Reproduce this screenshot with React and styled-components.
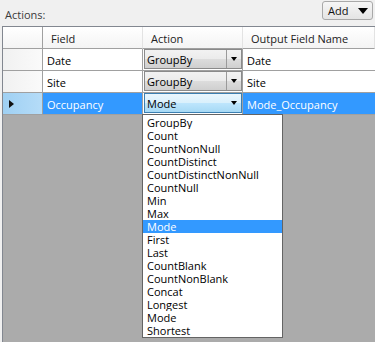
import React from "react";
import styled, { createGlobalStyle, css } from "styled-components";

const GlobalStyle = createGlobalStyle`
  html, body { margin: 0; padding: 0; background: #f0f0f0; }
  body { font-family: "Open Sans", "Noto Sans", sans-serif; font-size: 11px; color: #000; }
  * { box-sizing: border-box; }
`;

const Page = styled.div`
  width: 375px;
  height: 342px;
  display: flex;
  flex-direction: column;
  background: #f0f0f0;
  overflow: hidden;
`;

const TopBar = styled.div`
  height: 26px;
  display: flex;
  align-items: flex-start;
  justify-content: space-between;
  padding: 1px 2px 0 5px;
`;

const Label = styled.span`
  margin-top: 6px;
  color: #3a3a3a;
`;

const AddButton = styled.button`
  width: 51px;
  height: 19px;
  display: flex;
  align-items: center;
  justify-content: space-between;
  padding: 0 4px 0 5px;
  border: 1px solid #a9a9a9;
  border-radius: 3px;
  background: linear-gradient(#f6f6f6, #e4e4e4);
  font: inherit;
  color: #111;
`;

const Caret = styled.span`
  width: 0;
  height: 0;
  border-left: ${(p) => p.$w / 2}px solid transparent;
  border-right: ${(p) => p.$w / 2}px solid transparent;
  border-top: ${(p) => p.$h}px solid #000;
`;

const Frame = styled.div`
  flex: 1;
  margin-left: 2px;
  border-left: 1px solid #828790;
  border-top: 1px solid #828790;
  background: #ababab;
  position: relative;
`;

const Row = styled.div`
  display: grid;
  grid-template-columns: 40px 100px 100px 1fr;
  height: 22px;
`;

const HeadCell = styled.div`
  display: flex;
  align-items: center;
  padding: 2px 0 0 8px;
  background: linear-gradient(#ffffff, #f4f4f4);
  border-bottom: 1px solid #a0a0a0;
  border-right: 1px solid ${(p) => (p.$first ? "#a0a0a0" : "#e3e3e3")};
  color: #222;
`;

const RowHead = styled.div`
  display: flex;
  align-items: center;
  padding-left: 6px;
  background: ${(p) =>
    p.$selected ? "linear-gradient(to right, #9fd0f3, #b5dcf8)" : "linear-gradient(to right, #f1f1f1, #fafafa)"};
  border-right: 1px solid #a0a0a0;
  border-bottom: 1px solid #a0a0a0;
`;

const Pointer = styled.span`
  width: 0;
  height: 0;
  border-top: 4px solid transparent;
  border-bottom: 4px solid transparent;
  border-left: 5px solid #111;
`;

const Cell = styled.div`
  display: flex;
  align-items: center;
  padding: 1px 0 0 4px;
  border-right: ${(p) => (p.$last ? "none" : "1px solid #a0a0a0")};
  border-bottom: 1px solid #a0a0a0;
  background: ${(p) => (p.$selected ? "#3399ff" : "#fff")};
  color: ${(p) => (p.$selected ? "#fff" : "#000")};
`;

const ComboCell = styled.div`
  position: relative;
  padding: 0 0 1px 1px;
  border-right: 1px solid #a0a0a0;
  border-bottom: 1px solid #a0a0a0;
  background: #fff;
`;

const Combo = styled.div`
  height: 20px;
  width: 98px;
  display: flex;
  align-items: stretch;
  border: 1px solid ${(p) => (p.$active ? "#3c7fb1" : "#8a8a8a")};
  ${(p) =>
    p.$active
      ? css`
          background: linear-gradient(#eaf6fd 0%, #d9f0fc 50%, #bee6fd 50%, #a7d9f5 100%);
        `
      : css`
          background: linear-gradient(#f2f2f2 0%, #ebebeb 50%, #dddddd 50%, #cfcfcf 100%);
        `}
`;

const ComboText = styled.span`
  flex: 1;
  display: flex;
  align-items: center;
  padding: 1px 0 0 2px;
`;

const ComboArrow = styled.span`
  width: 15px;
  display: flex;
  align-items: center;
  justify-content: center;
  border-left: 1px solid ${(p) => (p.$active ? "transparent" : "#9a9a9a")};
`;

const DropList = styled.ul`
  position: absolute;
  left: -1px;
  top: 21px;
  width: 141px;
  height: 224px;
  margin: 0;
  padding: 1px 0 0;
  list-style: none;
  background: #fff;
  border: 1px solid #646464;
  z-index: 5;
`;

const Item = styled.li`
  height: 13px;
  line-height: 13px;
  padding-left: 4px;
  white-space: nowrap;
  overflow: hidden;
  background: ${(p) => (p.$hl ? "#3399ff" : "transparent")};
  color: ${(p) => (p.$hl ? "#fff" : "#000")};
`;

const options = [
  "GroupBy",
  "Count",
  "CountNonNull",
  "CountDistinct",
  "CountDistinctNonNull",
  "CountNull",
  "Min",
  "Max",
  "Mode",
  "First",
  "Last",
  "CountBlank",
  "CountNonBlank",
  "Concat",
  "Longest",
  "Mode",
  "Shortest",
];

const rows = [
  { field: "Date", action: "GroupBy", out: "Date" },
  { field: "Site", action: "GroupBy", out: "Site" },
  { field: "Occupancy", action: "Mode", out: "Mode_Occupancy", selected: true },
];

export default function App() {
  return (
    <Page>
      <GlobalStyle />
      <TopBar>
        <Label>Actions:</Label>
        <AddButton>
          Add <Caret $w={11} $h={6} />
        </AddButton>
      </TopBar>
      <Frame>
        <Row>
          <HeadCell $first />
          <HeadCell>Field</HeadCell>
          <HeadCell>Action</HeadCell>
          <HeadCell>Output Field Name</HeadCell>
        </Row>
        {rows.map((r, i) => (
          <Row key={i}>
            <RowHead $selected={r.selected}>{r.selected && <Pointer />}</RowHead>
            <Cell $selected={r.selected}>{r.field}</Cell>
            <ComboCell>
              <Combo $active={r.selected}>
                <ComboText>{r.action}</ComboText>
                <ComboArrow $active={r.selected}>
                  <Caret $w={7} $h={4} />
                </ComboArrow>
              </Combo>
              {r.selected && (
                <DropList>
                  {options.map((o, j) => (
                    <Item key={j} $hl={j === 8}>
                      {o}
                    </Item>
                  ))}
                </DropList>
              )}
            </ComboCell>
            <Cell $selected={r.selected} $last>
              {r.out}
            </Cell>
          </Row>
        ))}
      </Frame>
    </Page>
  );
}
